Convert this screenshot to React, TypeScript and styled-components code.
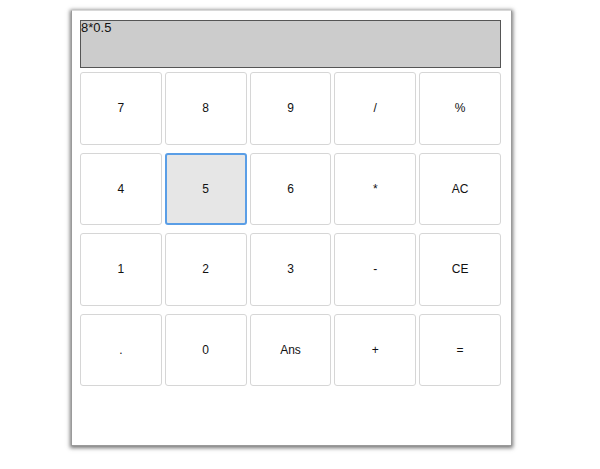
import React from 'react';
import styled, { createGlobalStyle } from 'styled-components';

const GlobalStyle = createGlobalStyle`
  body {
    margin: 0;
    background: #ffffff;
    font-family: "Liberation Sans", Arial, sans-serif;
  }
`;

const Page = styled.div`
  width: 600px;
  height: 469px;
  padding: 10px 0 0 71px;
  box-sizing: border-box;
`;

const Panel = styled.div`
  width: 441px;
  height: 436px;
  box-sizing: border-box;
  background: #ffffff;
  padding: 9px 10px 0 8px;
  box-shadow: 0 1px 4px 1px rgba(0, 0, 0, 0.55);
  border: 1px solid #9a9a9a;
  border-top-color: #d8d8d8;
`;

const Display = styled.div`
  width: 421px;
  height: 48px;
  box-sizing: border-box;
  background: #cccccc;
  border: 1px solid #555555;
  font-size: 13px;
  line-height: 14px;
  color: #111111;
  padding: 0;
`;

const Keys = styled.div`
  width: 421px;
  display: grid;
  grid-template-columns: repeat(5, 1fr);
  grid-auto-rows: 72.5px;
  column-gap: 3px;
  row-gap: 8px;
  margin-top: 4px;
`;

const Key = styled.button<{ $focused?: boolean }>`
  font-family: "Liberation Sans", Arial, sans-serif;
  font-size: 12px;
  color: #111111;
  background: ${(p) => (p.$focused ? '#e6e6e6' : '#ffffff')};
  border: ${(p) => (p.$focused ? '2px solid #5a9ee6' : '1px solid #d6d6d6')};
  border-radius: 3px;
  padding: 0;
  margin: 0;
  outline: none;
  cursor: pointer;
`;

const keys = ['7', '8', '9', '/', '%', '4', '5', '6', '*', 'AC', '1', '2', '3', '-', 'CE', '.', '0', 'Ans', '+', '='];

export default function App() {
  return (
    <>
      <GlobalStyle />
      <Page>
        <Panel>
          <Display>8*0.5</Display>
          <Keys>
            {keys.map((k) => (
              <Key key={k} $focused={k === '5'}>
                {k}
              </Key>
            ))}
          </Keys>
        </Panel>
      </Page>
    </>
  );
}
